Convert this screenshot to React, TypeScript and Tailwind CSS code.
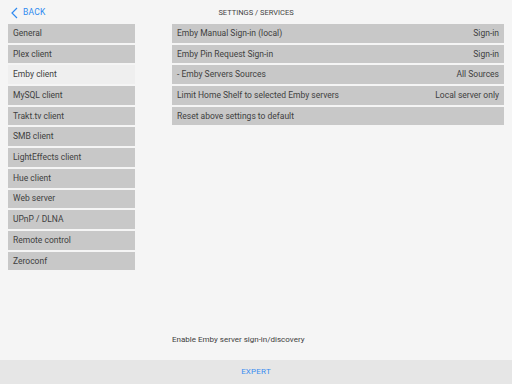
const menu = [
  "General",
  "Plex client",
  "Emby client",
  "MySQL client",
  "Trakt.tv client",
  "SMB client",
  "LightEffects client",
  "Hue client",
  "Web server",
  "UPnP / DLNA",
  "Remote control",
  "Zeroconf",
];

const settings = [
  { label: "Emby Manual Sign-in (local)", value: "Sign-in" },
  { label: "Emby Pin Request Sign-in", value: "Sign-in" },
  { label: "- Emby Servers Sources", value: "All Sources" },
  { label: "Limit Home Shelf to selected Emby servers", value: "Local server only" },
  { label: "Reset above settings to default", value: "" },
];

export default function App() {
  return (
    <div
      className="w-[512px] h-[384px] bg-[#f5f5f5] flex flex-col text-[#404040]"
      style={{ fontFamily: "Roboto, 'Liberation Sans', sans-serif" }}
    >
      {/* header */}
      <div className="h-[24px] flex items-center relative pt-[1px]">
        <div className="flex items-center gap-[5px] pl-[11px] text-[#2f8af0]">
          <svg width="7" height="12" viewBox="0 0 7 12" fill="none">
            <path d="M6 1L1 6L6 11" stroke="#2f8af0" strokeWidth="1.2" />
          </svg>
          <span className="text-[8.5px] tracking-[0.2px]">BACK</span>
        </div>
        <div className="absolute left-0 right-0 text-center text-[7.5px] text-[#444] pointer-events-none">
          SETTINGS / SERVICES
        </div>
      </div>

      <div className="flex-1 flex">
        {/* left menu */}
        <div className="w-[127px] ml-[8px] flex flex-col gap-[2px]">
          {menu.map((m) => (
            <div
              key={m}
              className={`h-[18.7px] flex items-center pl-[5px] text-[8.5px] ${
                m === "Emby client" ? "bg-[#efefef]" : "bg-[#c8c8c8]"
              }`}
            >
              {m}
            </div>
          ))}
        </div>

        {/* right content */}
        <div className="ml-[37px] w-[332px] flex flex-col">
          <div className="flex flex-col gap-[2px]">
            {settings.map((s) => (
              <div
                key={s.label}
                className="h-[18.7px] flex items-center justify-between px-[5px] text-[8.5px] bg-[#c8c8c8]"
              >
                <span>{s.label}</span>
                <span>{s.value}</span>
              </div>
            ))}
          </div>
          <div className="flex-1" />
          <div className="text-[8px] pb-[14px]">Enable Emby server sign-in/discovery</div>
        </div>
      </div>

      {/* footer */}
      <div className="h-[24px] bg-[#e6e6e6] flex items-center justify-center text-[8px] text-[#3a8ef0] tracking-[0.2px]">
        EXPERT
      </div>
    </div>
  );
}
